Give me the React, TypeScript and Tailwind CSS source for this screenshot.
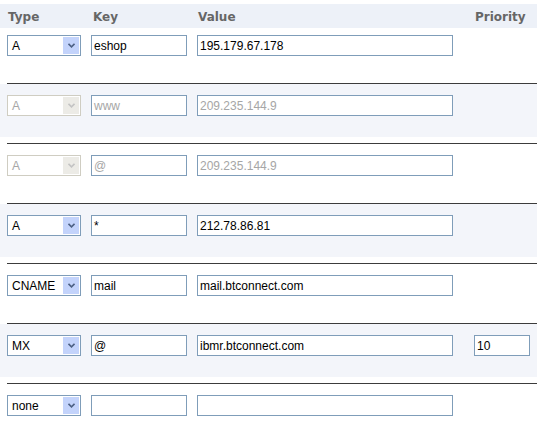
import React from "react";

type Row = {
  type: string;
  key: string;
  value: string;
  priority?: string;
  disabled?: boolean;
};

const ROWS: Row[] = [
  { type: "A", key: "eshop", value: "195.179.67.178" },
  { type: "A", key: "www", value: "209.235.144.9", disabled: true },
  { type: "A", key: "@", value: "209.235.144.9", disabled: true },
  { type: "A", key: "*", value: "212.78.86.81" },
  { type: "CNAME", key: "mail", value: "mail.btconnect.com" },
  { type: "MX", key: "@", value: "ibmr.btconnect.com", priority: "10" },
  { type: "none", key: "", value: "" },
];

function Select({ value, disabled }: { value: string; disabled?: boolean }) {
  return (
    <div
      className={`flex h-[21px] w-[74px] items-center border bg-white pl-[4px] pr-px ${
        disabled ? "border-[#cfcdc2] text-[#a6a6a6]" : "border-[#7f9db9] text-black"
      }`}
    >
      <span className="flex-1 leading-none">{value}</span>
      <span
        className={`flex h-[17px] w-[16px] items-center justify-center ${
          disabled ? "bg-[#ecebe6]" : "bg-[#c3d3fb]"
        }`}
      >
        <svg width="7" height="5" viewBox="0 0 7 5">
          <path
            d="M0.5 0.8 L3.5 3.8 L6.5 0.8"
            fill="none"
            stroke={disabled ? "#c4c4c4" : "#4d6185"}
            strokeWidth="1.6"
          />
        </svg>
      </span>
    </div>
  );
}

function Field({ value, width, disabled }: { value: string; width: string; disabled?: boolean }) {
  return (
    <div
      className={`flex h-[21px] ${width} items-center border border-[#7f9db9] bg-white pl-[2px] leading-none ${
        disabled ? "text-[#a6a6a6]" : "text-black"
      }`}
    >
      {value}
    </div>
  );
}

function RecordRow({ row }: { row: Row }) {
  return (
    <div className="grid grid-cols-[84px_106px_277px_1fr] pl-[7px]">
      <Select value={row.type} disabled={row.disabled} />
      <Field value={row.key} width="w-[96px]" disabled={row.disabled} />
      <Field value={row.value} width="w-[256px]" disabled={row.disabled} />
      <div>{row.priority !== undefined && <Field value={row.priority} width="w-[56px]" />}</div>
    </div>
  );
}

export default function App() {
  return (
    <div className="h-[424px] w-[537px] overflow-hidden bg-white font-['Liberation_Sans',Arial,sans-serif] text-[12px]">
      <div className="h-[4px] overflow-hidden pl-[7px]">
        <div className="mt-[-12px] font-['DejaVu_Sans',sans-serif] text-[11px] leading-[13px] text-[#888]">
          Settings
        </div>
      </div>
      <div className="grid h-[24px] grid-cols-[84px_106px_276px_1fr] items-center bg-[#edf1f8] pl-[8px] pt-[2px] font-['DejaVu_Sans',Verdana,sans-serif] text-[12px] font-bold text-[#666]">
        <span>Type</span>
        <span className="pl-px">Key</span>
        <span>Value</span>
        <span className="pl-px">Priority</span>
      </div>
      {ROWS.map((row, i) => (
        <div key={i}>
          {i > 0 && <div className="ml-[7px] h-px bg-[#3c3c3c]" />}
          {i === 0 ? (
            <div className="h-[55px] pt-[7px]">
              <RecordRow row={row} />
            </div>
          ) : (
            <>
              <div className={`h-[53px] pt-[11px] ${i % 2 === 1 ? "bg-[#f3f5fa]" : "bg-white"}`}>
                <RecordRow row={row} />
              </div>
              <div className="h-[6px]" />
            </>
          )}
        </div>
      ))}
    </div>
  );
}
